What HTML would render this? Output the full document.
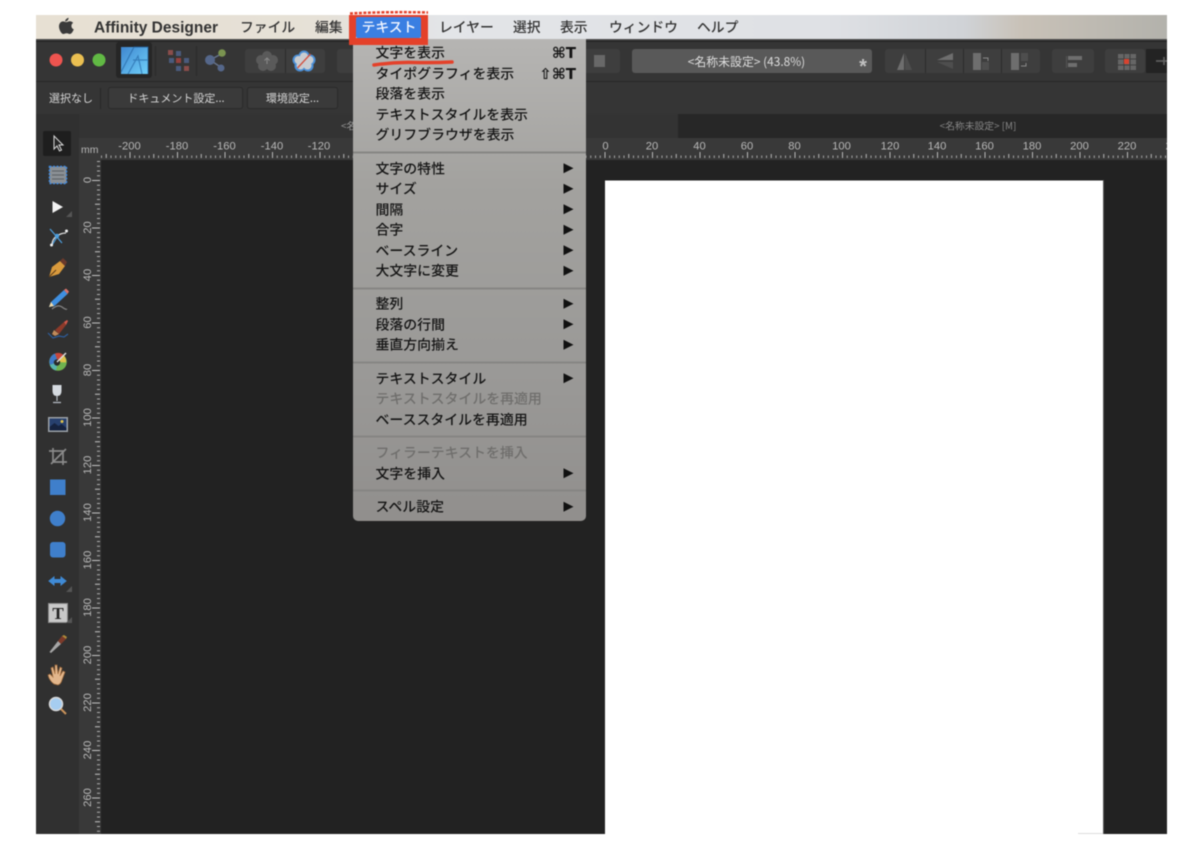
<!DOCTYPE html>
<html lang="ja">
<head>
<meta charset="utf-8">
<title>Affinity Designer</title>
<style>
html,body{margin:0;padding:0;background:#fff;width:1200px;height:848px;overflow:hidden}
svg{display:block;filter:blur(.45px)}
text{font-family:"Liberation Sans","Noto Sans CJK JP",sans-serif}
.jp{font-family:"Noto Sans CJK JP","Liberation Sans",sans-serif}
.mb{font-size:13.8px;fill:#333;font-weight:500}
.m{font-size:13.9px;fill:#141414;font-weight:500;font-family:"Noto Sans CJK JP","Liberation Sans",sans-serif}
.d{font-size:13.9px;fill:#6f6e6c;font-weight:500;font-family:"Noto Sans CJK JP","Liberation Sans",sans-serif}
.r{font-size:11.2px;fill:#b8b8b8;text-anchor:middle}
.c{font-size:11px;fill:#d6d6d6;font-family:"Noto Sans CJK JP","Liberation Sans",sans-serif}
</style>
</head>
<body>
<svg width="1200" height="848" viewBox="0 0 1200 848" xmlns="http://www.w3.org/2000/svg">
<defs>
<linearGradient id="bar" gradientUnits="userSpaceOnUse" x1="36" y1="0" x2="1167" y2="0">
<stop offset="0" stop-color="#e7e0d3"/><stop offset=".25" stop-color="#e6e1d7"/><stop offset=".36" stop-color="#e3e5e8"/><stop offset=".7" stop-color="#dfe1e5"/><stop offset=".82" stop-color="#d0d3d7"/><stop offset=".87" stop-color="#c9c2b8"/><stop offset="1" stop-color="#b3b2ac"/>
</linearGradient>
<linearGradient id="menu" x1="0" y1="0" x2="0" y2="1">
<stop offset="0" stop-color="#b6b5b3"/><stop offset=".3" stop-color="#a3a29f"/><stop offset=".7" stop-color="#9a9997"/><stop offset="1" stop-color="#918f8d"/>
</linearGradient>
<linearGradient id="aff" x1="0" y1="0" x2="1" y2="1">
<stop offset="0" stop-color="#3f86cf"/><stop offset="1" stop-color="#6fd0fa"/>
</linearGradient>
<pattern id="hticks" patternUnits="userSpaceOnUse" x="604.5" y="150" width="47.5" height="10">
<rect x="0" y="2" width="1" height="6" fill="#b8b8b8"/>
<rect x="4.75" y="5.5" width="1" height="2.5" fill="#a4a4a4"/>
<rect x="9.5" y="5.5" width="1" height="2.5" fill="#a4a4a4"/>
<rect x="14.25" y="5.5" width="1" height="2.5" fill="#a4a4a4"/>
<rect x="19" y="5.5" width="1" height="2.5" fill="#a4a4a4"/>
<rect x="23.75" y="4" width="1" height="4" fill="#b8b8b8"/>
<rect x="28.5" y="5.5" width="1" height="2.5" fill="#a4a4a4"/>
<rect x="33.25" y="5.5" width="1" height="2.5" fill="#a4a4a4"/>
<rect x="38" y="5.5" width="1" height="2.5" fill="#a4a4a4"/>
<rect x="42.75" y="5.5" width="1" height="2.5" fill="#a4a4a4"/>
</pattern>
<pattern id="vticks" patternUnits="userSpaceOnUse" x="90" y="180" width="12" height="47.5">
<rect x="2" y="0" width="8" height="1" fill="#c4c4c4"/>
<rect x="7" y="4.75" width="3" height="1" fill="#b0b0b0"/>
<rect x="7" y="9.5" width="3" height="1" fill="#b0b0b0"/>
<rect x="7" y="14.25" width="3" height="1" fill="#b0b0b0"/>
<rect x="7" y="19" width="3" height="1" fill="#b0b0b0"/>
<rect x="5" y="23.75" width="5" height="1" fill="#c4c4c4"/>
<rect x="7" y="28.5" width="3" height="1" fill="#b0b0b0"/>
<rect x="7" y="33.25" width="3" height="1" fill="#b0b0b0"/>
<rect x="7" y="38" width="3" height="1" fill="#b0b0b0"/>
<rect x="7" y="42.75" width="3" height="1" fill="#b0b0b0"/>
</pattern>
<clipPath id="win"><rect x="36" y="15" width="1131" height="819"/></clipPath>
</defs>

<g clip-path="url(#win)">
<!-- app window -->
<rect x="36" y="39" width="1131" height="795" fill="#222"/>
<rect x="36" y="40" width="1131" height="41" fill="#353535"/>
<rect x="36" y="40" width="1131" height="2" fill="#242424"/>
<rect x="36" y="81" width="1131" height="1" fill="#282828"/>
<rect x="36" y="82" width="1131" height="32" fill="#353535"/>
<rect x="36" y="114" width="1131" height="24" fill="#272727"/>
<rect x="79" y="114" width="599" height="24" fill="#333"/>
<rect x="36" y="114" width="43" height="720" fill="#303030"/>
<rect x="79" y="138" width="1088" height="22" fill="#393939"/>
<rect x="79" y="138" width="22" height="696" fill="#393939"/>
<rect x="101" y="160" width="1066" height="674" fill="#222"/>
<rect x="605" y="180.500" width="498" height="660" fill="#fff"/>
<rect x="1103" y="180" width="1" height="654" fill="#555"/>

<!-- rulers -->
<rect x="101" y="150" width="1066" height="10" fill="url(#hticks)"/>
<rect x="90" y="160" width="12" height="674" fill="url(#vticks)"/>
<text x="81" y="153" font-size="10.500" fill="#b8b8b8">mm</text>
<text class="r" x="129.500" y="149.500">-200</text>
<text class="r" x="177" y="149.500">-180</text>
<text class="r" x="224.500" y="149.500">-160</text>
<text class="r" x="272" y="149.500">-140</text>
<text class="r" x="319" y="149.500">-120</text>
<text class="r" x="605.500" y="149.500">0</text>
<text class="r" x="652" y="149.500">20</text>
<text class="r" x="699.500" y="149.500">40</text>
<text class="r" x="747" y="149.500">60</text>
<text class="r" x="794.500" y="149.500">80</text>
<text class="r" x="841.500" y="149.500">100</text>
<text class="r" x="890" y="149.500">120</text>
<text class="r" x="937" y="149.500">140</text>
<text class="r" x="984.500" y="149.500">160</text>
<text class="r" x="1032" y="149.500">180</text>
<text class="r" x="1079.500" y="149.500">200</text>
<text class="r" x="1127" y="149.500">220</text>
<text class="r" x="1175" y="149.500">240</text>
<g>
<text class="r" transform="translate(91 180) rotate(-90)">0</text>
<text class="r" transform="translate(91 227.500) rotate(-90)">20</text>
<text class="r" transform="translate(91 275) rotate(-90)">40</text>
<text class="r" transform="translate(91 322.500) rotate(-90)">60</text>
<text class="r" transform="translate(91 370) rotate(-90)">80</text>
<text class="r" transform="translate(91 417.500) rotate(-90)">100</text>
<text class="r" transform="translate(91 465) rotate(-90)">120</text>
<text class="r" transform="translate(91 512.500) rotate(-90)">140</text>
<text class="r" transform="translate(91 560) rotate(-90)">160</text>
<text class="r" transform="translate(91 607.500) rotate(-90)">180</text>
<text class="r" transform="translate(91 655) rotate(-90)">200</text>
<text class="r" transform="translate(91 702.500) rotate(-90)">220</text>
<text class="r" transform="translate(91 750) rotate(-90)">240</text>
<text class="r" transform="translate(91 797.500) rotate(-90)">260</text>
</g>

<!-- tabs text -->
<text x="341" y="129.500" font-size="9.800" fill="#999" class="jp">&lt;名称未設定&gt; [M]</text>
<text x="978" y="129.500" font-size="9.800" fill="#868686" text-anchor="middle" class="jp">&lt;名称未設定&gt; [M]</text>

<!-- menubar -->
<rect x="36" y="15" width="1131" height="24" fill="url(#bar)"/>
<rect x="36" y="39" width="1131" height="1.500" fill="#4a4a4a"/>
<g transform="translate(66 26) scale(1.300) translate(-66 -27)">
<path d="M65.500 22.500c.8-1.100 1.900-1.700 2.500-1.800.1 1.200-.9 2.600-2.500 2.900-.2-.3-.1-.7 0-1.100zM66 24c1.100 0 1.700-.7 3-.7 1 0 1.900.5 2.500 1.300-2 1.200-1.700 4.200.5 5-.6 1.500-1.900 3.600-3.100 3.600-.9 0-1.200-.6-2.400-.6s-1.600.6-2.500.6c-1.500 0-3.400-3.300-3.400-5.900 0-2.400 1.600-3.900 3.100-3.900 1 0 1.700.6 2.300.6z" fill="#3a3a3a"/>
</g>
<text x="94" y="32.500" font-size="15.500" font-weight="bold" fill="#333">Affinity Designer</text>
<text class="mb" x="240" y="32">ファイル</text>
<text class="mb" x="315" y="32">編集</text>
<text class="mb" x="439" y="32">レイヤー</text>
<text class="mb" x="513" y="32">選択</text>
<text class="mb" x="560" y="32">表示</text>
<text class="mb" x="609" y="32">ウィンドウ</text>
<text class="mb" x="697" y="32">ヘルプ</text>

<!-- traffic lights -->
<circle cx="56" cy="60" r="6.500" fill="#ee544f"/>
<circle cx="77.500" cy="60" r="6.500" fill="#eabf51"/>
<circle cx="99" cy="60" r="6.500" fill="#61b944"/>

<!-- Affinity icon -->
<rect x="116" y="42" width="36" height="36" rx="3" fill="#262626"/>
<rect x="121" y="47" width="27" height="27" fill="url(#aff)"/>
<path d="M121 72l13-25h14v27M133 60h15M128 74l10-18 4 18" stroke="#1f5f9f" stroke-width="1.200" fill="none" opacity=".6"/>
<rect x="155" y="46" width="1" height="30" fill="#2a2a2a"/>
<rect x="196" y="46" width="1" height="30" fill="#2a2a2a"/>

<!-- persona grid -->
<g opacity=".9">
<rect x="168" y="50" width="5" height="5" fill="#94504e"/><rect x="176" y="51" width="5" height="5" fill="#4d6085"/>
<rect x="169" y="58" width="5" height="5" fill="#4d6085"/><rect x="176" y="58" width="5" height="5" fill="#a04340"/><rect x="184" y="58" width="5" height="5" fill="#4d6085"/>
<rect x="176" y="66" width="5" height="5" fill="#4d6085"/><rect x="184" y="66" width="5" height="5" fill="#94504e"/>
</g>
<!-- share icon -->
<path d="M210 60l13-7M210 60l12 8" stroke="#66738c" stroke-width="1.500"/>
<circle cx="210" cy="60" r="5" fill="#55678a"/><circle cx="222" cy="53" r="3.800" fill="#7a9350"/><circle cx="221" cy="68" r="3.500" fill="#55678a"/>

<!-- toolbar groups -->
<rect x="245" y="49" width="80" height="24" rx="3" fill="#3e3e3e"/>
<rect x="285" y="49" width="1" height="24" fill="#2c2c2c"/>
<g fill="#5a5a5a">
<circle cx="267" cy="56" r="5"/><circle cx="273" cy="60" r="5"/><circle cx="271" cy="66" r="5"/><circle cx="263" cy="66" r="5"/><circle cx="261" cy="60" r="5"/><circle cx="267" cy="61" r="5"/>
</g>
<path d="M267 64v-6m-2.500 2.500l2.500-2.500 2.500 2.500" stroke="#8a8a8a" fill="none"/>
<g fill="#4b8fd6">
<circle cx="304" cy="56" r="5.500"/><circle cx="310" cy="60" r="5.500"/><circle cx="308" cy="66" r="5.500"/><circle cx="300" cy="66" r="5.500"/><circle cx="298" cy="60" r="5.500"/>
</g>
<g fill="#c9ccd0">
<circle cx="304" cy="56.500" r="4"/><circle cx="309.500" cy="60" r="4"/><circle cx="307.500" cy="65.500" r="4"/><circle cx="300.500" cy="65.500" r="4"/><circle cx="298.500" cy="60" r="4"/><circle cx="304" cy="61" r="5"/>
</g>
<path d="M297.500 68l13-14" stroke="#d2503f" stroke-width="1.300"/>
<rect x="337" y="49" width="20" height="24" rx="3" fill="#3e3e3e"/>
<rect x="580" y="49" width="40" height="24" rx="3" fill="#3e3e3e"/>
<rect x="594" y="55" width="11" height="12" fill="#686868"/>
<rect x="632" y="49" width="240" height="24" rx="3" fill="#595959"/>
<text x="746.500" y="66" font-size="11.900" fill="#dedede" text-anchor="middle" class="jp">&lt;名称未設定&gt; (43.8%)</text>
<text x="863" y="73" font-size="20" font-weight="bold" fill="#c0c0c0" text-anchor="middle">*</text>
<rect x="885" y="49" width="155" height="24" rx="3" fill="#3e3e3e"/>
<rect x="925" y="49" width="1" height="24" fill="#2c2c2c"/><rect x="963" y="49" width="1" height="24" fill="#2c2c2c"/><rect x="1001" y="49" width="1" height="24" fill="#2c2c2c"/>
<path d="M897 70l7-17v17z" fill="#6e6e6e"/><path d="M905 53l7 17h-7z" fill="#4e4e4e"/>
<path d="M937 60l16-7v7z" fill="#6e6e6e"/><path d="M937 62h16v7z" fill="#4e4e4e"/>
<rect x="973" y="53" width="8" height="17" fill="#6e6e6e"/><rect x="982" y="62" width="7" height="8" fill="#4e4e4e"/><path d="M983 58h5v3" stroke="#8a8a8a" fill="none"/>
<rect x="1011" y="53" width="8" height="17" fill="#6e6e6e"/><rect x="1021" y="53" width="7" height="8" fill="#4e4e4e"/><path d="M1026 63v3h-5" stroke="#8a8a8a" fill="none"/>
<rect x="1052" y="49" width="42" height="24" rx="3" fill="#3e3e3e"/>
<rect x="1066" y="56" width="1" height="12" fill="#555"/><rect x="1068" y="56" width="14" height="4" fill="#6e6e6e"/><rect x="1068" y="63" width="9" height="4" fill="#6e6e6e"/>
<rect x="1105" y="49" width="40" height="24" rx="3" fill="#3e3e3e"/>
<path d="M1118 54h18v16h-18z" fill="#666"/><path d="M1118 59h18M1118 65h18M1124 52v20M1130 52v20" stroke="#3e3e3e" fill="none"/>
<rect x="1124" y="59" width="5" height="5" fill="#d8432f"/>
<rect x="1146" y="49" width="21" height="24" fill="#232323"/>
<path d="M1156 61h11M1164 57v8" stroke="#666" stroke-width="1.500"/>

<!-- context bar -->
<text class="c" x="49" y="102">選択なし</text>
<rect x="100" y="88" width="1" height="21" fill="#272727"/>
<rect x="108.500" y="87.500" width="134" height="21" rx="2" fill="#3a3a3a" stroke="#2a2a2a"/>
<text class="c" x="176" y="102" text-anchor="middle">ドキュメント設定...</text>
<rect x="247.500" y="87.500" width="90" height="21" rx="2" fill="#3a3a3a" stroke="#2a2a2a"/>
<text class="c" x="292.500" y="102" text-anchor="middle">環境設定...</text>

<!-- tools -->
<rect x="43" y="131" width="28" height="25" rx="2" fill="#1e1e1e"/>
<path d="M54 136v13l3-3 2.500 5 2-1-2.500-5h4z" fill="#262626" stroke="#d8d8d8" stroke-width="1"/>
<!-- artboard -->
<rect x="49.500" y="166.500" width="17" height="17" fill="#8a8f94" stroke="#3f8ae0" stroke-width="1.500" stroke-dasharray="2 1.500"/>
<path d="M52 171h12M52 175h12M52 179h12" stroke="#5b5f63"/>
<!-- move -->
<path d="M52.500 201v12l10.500-6z" fill="#f2f2f2"/>
<path d="M72 211v6h-6z" fill="#555"/>
<!-- node -->
<path d="M50 229l7 8 5 6M57 237l-5 8" stroke="#4d9fdf" stroke-width="1.200" fill="none"/>
<path d="M57 236q-5 3-5 9M57 236q4-3 9-3" stroke="#ddd" stroke-width="1.300" fill="none"/>
<circle cx="57" cy="236" r="2.200" fill="#4d9fdf"/><circle cx="51.500" cy="245" r="1.500" fill="#eee"/><circle cx="66.500" cy="231" r="1.500" fill="#eee"/>
<!-- pen -->
<path d="M49 277l3-10 8-6 5 5-6 8z" fill="#d99a3c"/><path d="M60 261l3-3 4 4-2 4z" fill="#6a3a2c"/><path d="M49 277l7-7" stroke="#5a3a1a"/>
<!-- pencil -->
<path d="M49 307l2-5 13-12 3.500 4-13 12z" fill="#3f8fe0"/><path d="M64 290l2-1.500 3 3-1.500 2.500z" fill="#d9736a"/><path d="M49 307l5-1-3-4z" fill="#f0d9a8"/>
<path d="M52 309q6-5 10-2t5 2" stroke="#888" stroke-width="1.200" fill="none"/>
<!-- brush -->
<path d="M55 330l9-8 2 3-7 9z" fill="#8c3a2a"/><path d="M64 322l3-2 1 1-2 4z" fill="#d0584a"/><path d="M54 330l5 4-4 2-3-2z" fill="#c08a5a"/>
<path d="M48 333l5 5 6-2 5 1 4-3" stroke="#2d5d9d" stroke-width="1.200" fill="none"/>
<!-- fill -->
<circle cx="58" cy="362" r="8.800" fill="#6fb34f"/>
<path d="M58 362l-8 3a8.800 8.800 0 0 1 5-11.500z" fill="#3f79c8"/><path d="M58 362l-3-8.500a8.800 8.800 0 0 1 9 2z" fill="#c8463b"/><path d="M58 362l6-6.500a8.800 8.800 0 0 1 2 7z" fill="#e0c24a"/><path d="M58 362l-8 3a8.800 8.800 0 0 0 6 5.500z" fill="#58b5b0"/>
<circle cx="57" cy="362.500" r="3.200" fill="#2a2a2a"/><path d="M57 362l9-9" stroke="#ddd" stroke-width="1.500"/>
<!-- glass -->
<path d="M52.500 385h9v6q0 5-4.500 5t-4.500-5z" fill="#d5dae0"/><path d="M57 396v5M53 402.500h8" stroke="#b6bcc4" stroke-width="1.200"/>
<!-- image -->
<rect x="48" y="417" width="20" height="15" fill="#9aa0a6"/><rect x="49.500" y="418.500" width="17" height="12" fill="#27406e"/><path d="M49.500 427l5-4 4 3 3-2 5 4v2.500h-17z" fill="#16233f"/><circle cx="62" cy="421.500" r="1.500" fill="#e0c24a"/>
<!-- crop -->
<path d="M53 448v14h14M49 451h14v14M51 464l15-15" stroke="#8a8a8a" stroke-width="1.700" fill="none"/>
<!-- rect -->
<rect x="50" y="479.500" width="15.500" height="15.500" fill="#3f7fcb"/>
<circle cx="57.500" cy="518.500" r="7.700" fill="#3f7fcb"/>
<rect x="50" y="542" width="15.500" height="15.500" rx="3" fill="#3f7fcb"/>
<!-- double arrow -->
<path d="M49 581l5-4v2.500h7V577l5 4-5 4v-2.500h-7V585z" fill="#3f8ad5" stroke="#3f8ad5" stroke-width="1"/>
<path d="M72 586v6h-6z" fill="#555"/>
<!-- T -->
<rect x="48.500" y="603.500" width="19" height="19" fill="#c9c9c9" stroke="#8a8a8a"/>
<text x="58" y="619" font-size="17" font-weight="bold" fill="#222" text-anchor="middle" style="font-family:'Liberation Serif',serif">T</text>
<path d="M72 617v6h-6z" fill="#555"/>
<!-- dropper -->
<path d="M49.500 652l8.500-11 3 3-10 9z" fill="#a6a6a6"/><path d="M58 641l4-5 4 3-5 5z" fill="#7c3a2a"/><path d="M62 636l2-1 3 2-1 2z" fill="#b08b3a"/>
<!-- hand -->
<path d="M54 684q-3-2-5-6l-1-3 2-1 3 3-2-9 2-1 2 7 0-9h2l1 9 2-7 2 1-2 8 3-5 2 1-3 8q-1 4-4 5z" fill="#e2b68c" stroke="#a06a3a" stroke-width=".7"/>
<!-- zoom -->
<circle cx="56" cy="704" r="6.500" fill="#a6cdf0" stroke="#d9d9d9" stroke-width="1.500"/>
<path d="M61 709l5 5" stroke="#c9935a" stroke-width="2"/>

<!-- menu -->
<path d="M353 39h233v477a5 5 0 0 1-5 5H358a5 5 0 0 1-5-5z" fill="url(#menu)"/>
<g fill="#868583">
<rect x="353" y="151.500" width="233" height="2"/><rect x="353" y="287.500" width="233" height="2"/><rect x="353" y="361.500" width="233" height="2"/><rect x="353" y="435.500" width="233" height="2"/><rect x="353" y="489.500" width="233" height="2"/>
</g>
<text class="m" x="375.500" y="57.500">文字を表示</text>
<text class="m" x="375.500" y="78.500">タイポグラフィを表示</text>
<text class="m" x="375.500" y="98.500">段落を表示</text>
<text class="m" x="375.500" y="119.500">テキストスタイルを表示</text>
<text class="m" x="375.500" y="139.500">グリフブラウザを表示</text>
<text class="m" x="375.500" y="173.500">文字の特性</text>
<text class="m" x="375.500" y="193.500">サイズ</text>
<text class="m" x="375.500" y="214.500">間隔</text>
<text class="m" x="375.500" y="234.500">合字</text>
<text class="m" x="375.500" y="255.500">ベースライン</text>
<text class="m" x="375.500" y="275.500">大文字に変更</text>
<text class="m" x="375.500" y="308.500">整列</text>
<text class="m" x="375.500" y="329.500">段落の行間</text>
<text class="m" x="375.500" y="349.500">垂直方向揃え</text>
<text class="m" x="375.500" y="383.500">テキストスタイル</text>
<text class="d" x="375.500" y="403.500">テキストスタイルを再適用</text>
<text class="m" x="375.500" y="424.500">ベーススタイルを再適用</text>
<text class="d" x="375.500" y="457.500">フィラーテキストを挿入</text>
<text class="m" x="375.500" y="478.500">文字を挿入</text>
<text class="m" x="375.500" y="511.500">スペル設定</text>
<text x="576" y="58" font-size="15" font-weight="bold" fill="#141414" text-anchor="end" style="font-family:'DejaVu Sans',sans-serif">⌘T</text>
<text x="576" y="79" font-size="15" font-weight="bold" fill="#141414" text-anchor="end" style="font-family:'DejaVu Sans',sans-serif">⇧⌘T</text>
<g fill="#111">
<path d="M563.500 163.200l10 5-10 5z"/><path d="M563.500 183.700l10 5-10 5z"/><path d="M563.500 204.200l10 5-10 5z"/><path d="M563.500 224.700l10 5-10 5z"/><path d="M563.500 245.200l10 5-10 5z"/><path d="M563.500 265.700l10 5-10 5z"/>
<path d="M563.500 298.700l10 5-10 5z"/><path d="M563.500 319.200l10 5-10 5z"/><path d="M563.500 339.700l10 5-10 5z"/>
<path d="M563.500 373.200l10 5-10 5z"/><path d="M563.500 468.200l10 5-10 5z"/><path d="M563.500 501.700l10 5-10 5z"/>
</g>

<!-- highlight -->
<rect x="352.500" y="14.500" width="72" height="27" fill="none" stroke="#e4412a" stroke-width="7"/>
<rect x="356" y="17" width="65" height="21" rx="2" fill="#3a7fe2"/>
<text x="389" y="32" font-size="13.800" font-weight="500" fill="#f4f7ff" text-anchor="middle" class="jp">テキスト</text>
<path d="M374 65q20-3 40-2.500t38-.5" stroke="#e4412a" stroke-width="3.500" fill="none" stroke-linecap="round"/>
</g>

<!-- overflow of red scribble above window -->
<path d="M350 13.500q38-2 78-1" stroke="#e4412a" stroke-width="2.500" fill="none" stroke-dasharray="3 1.500"/>
<rect x="1078" y="833" width="25" height="1" fill="#ddd"/>
</svg>
</body>
</html>
